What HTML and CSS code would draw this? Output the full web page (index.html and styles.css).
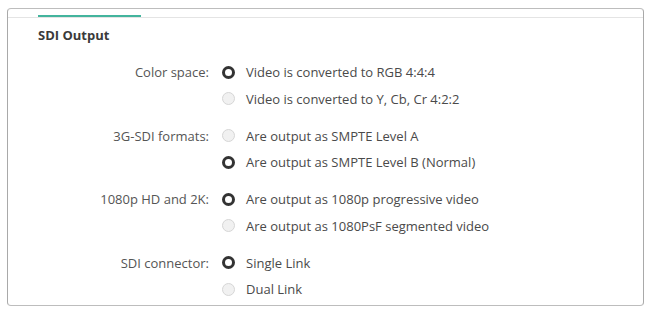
FILE: index.html
```html
<!DOCTYPE html>
<html>
<head>
<meta charset="utf-8">
<link rel="stylesheet" href="styles.css">
</head>
<body>
<div class="panel">
  <div class="tabs"><div class="tab-indicator"></div></div>
  <div class="title">SDI Output</div>
  <div class="settings">
    <div class="label">Color space:</div>
    <div class="options">
      <div class="option"><span class="radio on"></span>Video is converted to RGB 4:4:4</div>
      <div class="option"><span class="radio"></span>Video is converted to Y, Cb, Cr 4:2:2</div>
    </div>
    <div class="label">3G-SDI formats:</div>
    <div class="options">
      <div class="option"><span class="radio"></span>Are output as SMPTE Level A</div>
      <div class="option"><span class="radio on"></span>Are output as SMPTE Level B (Normal)</div>
    </div>
    <div class="label">1080p HD and 2K:</div>
    <div class="options">
      <div class="option"><span class="radio on"></span>Are output as 1080p progressive video</div>
      <div class="option"><span class="radio"></span>Are output as 1080PsF segmented video</div>
    </div>
    <div class="label">SDI connector:</div>
    <div class="options">
      <div class="option"><span class="radio on"></span>Single Link</div>
      <div class="option"><span class="radio"></span>Dual Link</div>
    </div>
  </div>
</div>
</body>
</html>
```
FILE: styles.css
```css
html, body {
  margin: 0;
  padding: 0;
  background: #ffffff;
}
body {
  font-family: "Open Sans", "Liberation Sans", sans-serif;
  color: #555555;
}
.panel {
  margin: 8px 4px 0 7px;
  height: 298px;
  box-sizing: border-box;
  border: 1px solid #bdbdbd;
  border-left-color: #a9a9a9;
  border-right-color: #a9a9a9;
  border-radius: 4px;
  background: #ffffff;
}
.tabs {
  height: 8px;
  border-bottom: 1px solid #e4e4e4;
  padding-left: 30px;
  display: flex;
  align-items: flex-end;
}
.tab-indicator {
  width: 103px;
  height: 2px;
  background: #43b49d;
}
.title {
  padding: 8px 0 0 30px;
  height: 18px;
  line-height: 18px;
  font-size: 13px;
  font-weight: 700;
  color: #3a3a3a;
}
.settings {
  margin-top: 15px;
  display: grid;
  grid-template-columns: 201px auto;
  column-gap: 13px;
  row-gap: 10.5px;
}
.label {
  text-align: right;
  font-size: 13px;
  line-height: 26px;
  height: 26px;
}
.options {
  display: flex;
  flex-direction: column;
}
.option {
  display: flex;
  align-items: center;
  height: 26.5px;
  font-size: 13px;
  gap: 11px;
  color: #4a4a4a;
}
.radio {
  width: 13px;
  height: 13px;
  box-sizing: border-box;
  border-radius: 50%;
  border: 1px solid #d6d6d6;
  background: #f1f1f1;
  flex: none;
}
.radio.on {
  border: 3px solid #333333;
  background: #ffffff;
}
```
